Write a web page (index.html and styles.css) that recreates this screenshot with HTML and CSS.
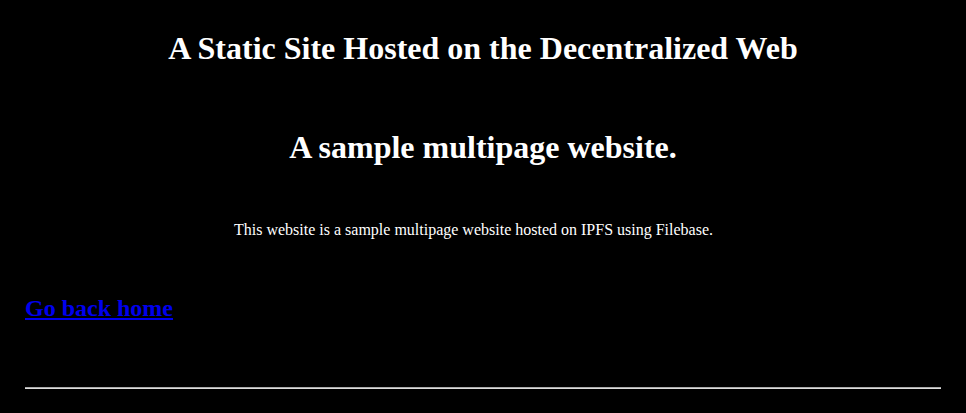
FILE: index.html
```html
<!DOCTYPE html>
<html>
<head>
<meta charset="utf-8">
<title>A Static Site Hosted on the Decentralized Web</title>
<link rel="stylesheet" href="styles.css">
</head>
<body>
<div class="page">
  <header class="site-header">
    <h1 class="site-title">A Static Site Hosted on the Decentralized Web</h1>
  </header>
  <main class="content">
    <h2 class="page-title">A sample multipage website.</h2>
    <p class="intro">This website is a sample multipage website hosted on IPFS using Filebase.</p>
    <h3 class="back"><a href="#" class="back-link">Go back home</a></h3>
  </main>
  <hr class="rule">
</div>
</body>
</html>
```

FILE: styles.css
```css
html, body {
  margin: 0;
  padding: 0;
  background: #000;
  color: #fff;
  font-family: "Liberation Serif", "Times New Roman", serif;
  line-height: 1.15;
}
.page {
  padding: 0 25px;
}
.site-title {
  margin: 0;
  padding-top: 30px;
  text-align: center;
  font-size: 32px;
  font-weight: bold;
}
.page-title {
  margin: 62px 0 0;
  text-align: center;
  font-size: 32px;
  font-weight: bold;
}
.intro {
  margin: 55px 0 0;
  padding-right: 19px;
  text-align: center;
  font-size: 16px;
}
.back {
  margin: 56px 0 0;
  font-size: 24px;
  font-weight: bold;
}
.back-link {
  color: #0000ee;
}
.rule {
  margin: 64px 0 0;
  border: 0;
  border-top: 1px solid #aaa;
  border-bottom: 1px solid #ddd;
}
```
